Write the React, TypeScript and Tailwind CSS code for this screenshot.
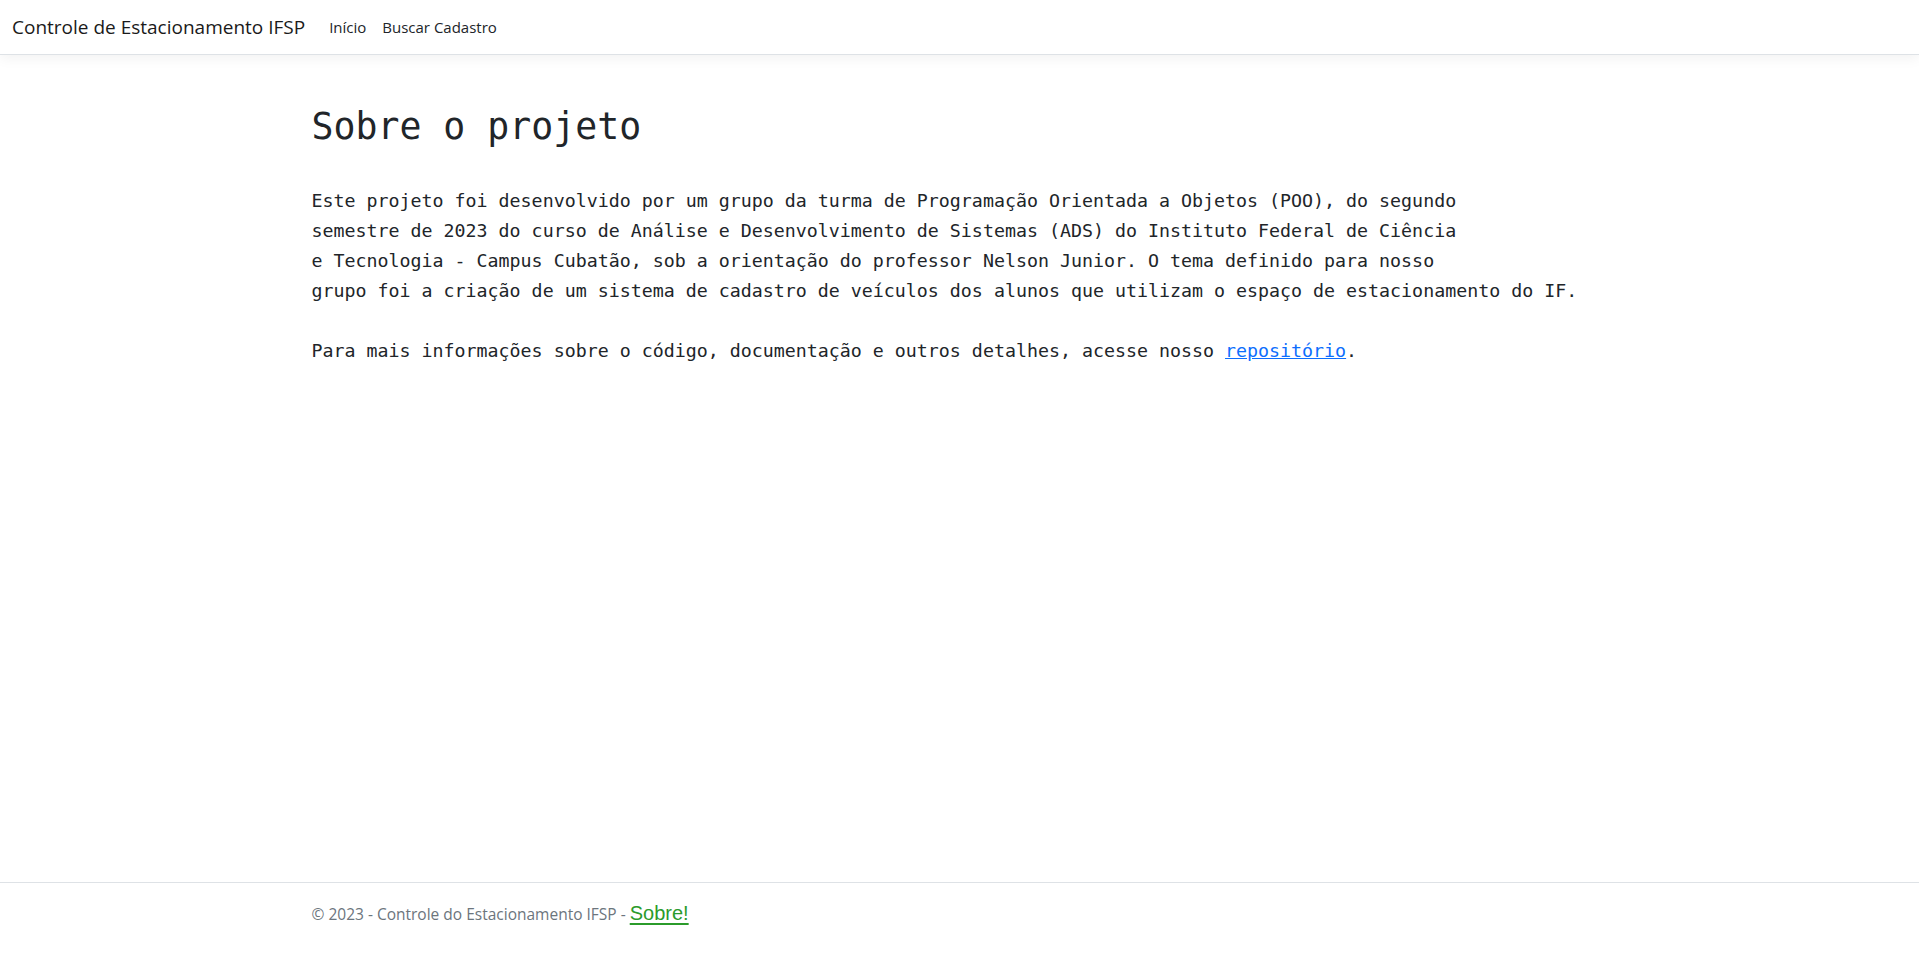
export default function App() {
    return (
        <div className="flex min-h-screen flex-col bg-white text-[#212529] font-['Open_Sans',sans-serif]">
            <header className="flex h-[55px] items-center border-b border-[#dee2e6] bg-white px-3 shadow-[0_4px_12px_rgba(0,0,0,0.05)]">
                <a href="#" className="mr-4 text-[19px] text-[#1a1a1a]">
                    Controle de Estacionamento IFSP
                </a>
                <nav className="flex text-[15px]">
                    <a href="#" className="px-2 text-[#212529]">Início</a>
                    <a href="#" className="px-2 text-[#212529]">Buscar Cadastro</a>
                </nav>
            </header>

            <main className="flex-1">
                <div className="mx-auto w-[1320px] px-3 pt-[48px] font-['DejaVu_Sans_Mono',monospace]">
                    <h1 className="text-[36.5px] leading-[48px] font-normal">Sobre o projeto</h1>
                    <div className="mt-[35px] text-[18.3px] leading-[30px]">
                        <p>
                            Este projeto foi desenvolvido por um grupo da turma de Programação Orientada a Objetos (POO), do segundo
                            <br />
                            semestre de 2023 do curso de Análise e Desenvolvimento de Sistemas (ADS) do Instituto Federal de Ciência
                            <br />
                            e Tecnologia - Campus Cubatão, sob a orientação do professor Nelson Junior. O tema definido para nosso
                            <br />
                            grupo foi a criação de um sistema de cadastro de veículos dos alunos que utilizam o espaço de estacionamento do IF.
                        </p>
                        <p className="mt-[30px]">
                            Para mais informações sobre o código, documentação e outros detalhes, acesse nosso{" "}
                            <a href="#" className="text-[#0d6efd] underline">repositório</a>.
                        </p>
                    </div>
                </div>
            </main>

            <footer className="h-[78px] border-t border-[#dee2e6] whitespace-nowrap">
                <div className="mx-auto w-[1320px] px-3 leading-[60px] text-[15.5px] text-[#6c757d]">
                    © 2023 - Controle do Estacionamento IFSP -{" "}
                    <a href="#" className="font-['Liberation_Sans',Arial,sans-serif] text-[20px] text-[#2b9b2b] underline underline-offset-[3px]">
                        Sobre!
                    </a>
                </div>
            </footer>
        </div>
    );
}
